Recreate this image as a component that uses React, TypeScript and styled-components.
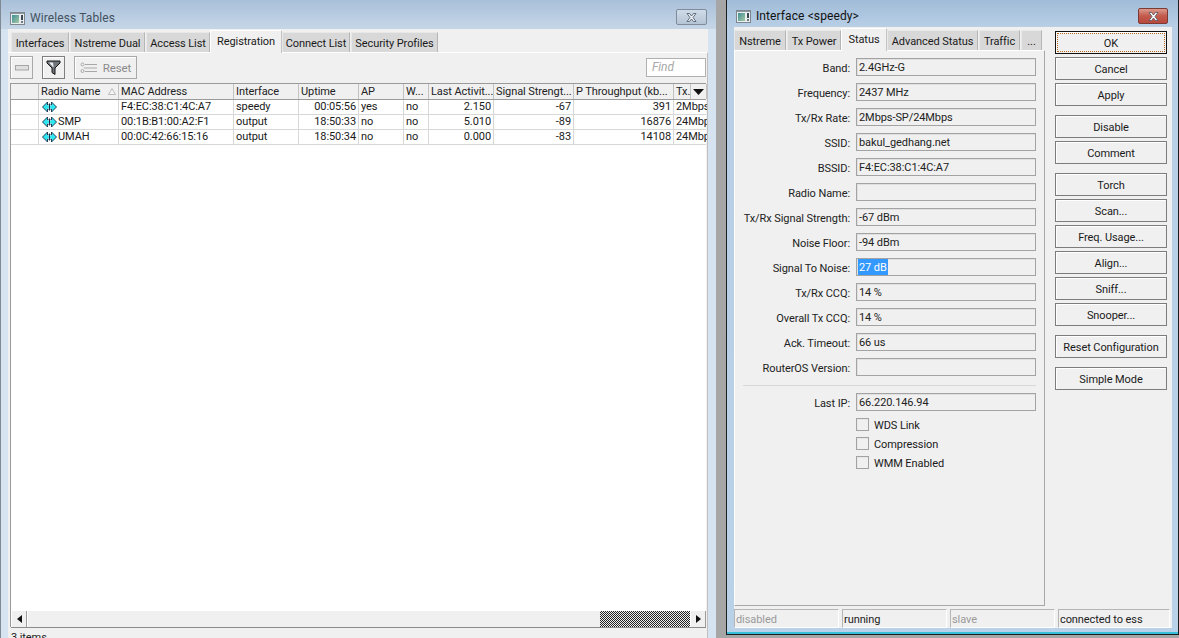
import React from "react";
import styled, { createGlobalStyle, css } from "styled-components";

const Global = createGlobalStyle`
  html, body { margin: 0; padding: 0; width: 1179px; height: 638px; overflow: hidden; background: #a6a6a6; }
  #root { width: 1179px; height: 638px; overflow: hidden; }
  * { box-sizing: border-box; }
`;
const FONT = `Roboto, "Liberation Sans", Arial, sans-serif`;

const Desktop = styled.div`
  display: flex; gap: 10px; width: 1179px; height: 638px; align-items: flex-start;
  font-family: ${FONT}; font-size: 11px; letter-spacing: -0.08px; color: #1a1a1a; overflow: hidden;
`;
const LeftWindow = styled.div`
  width: 716px; height: 660px; flex: none; display: flex; flex-direction: column;
  background: linear-gradient(#a9c0d9 0, #c6d6e7 29px, #d6e4f2 29px, #d6e4f2 100%);
  padding: 0 8px; border-left: 1px solid #7f8a95; position: relative;
`;
const RightWindow = styled.div`
  width: 453px; height: 637px; flex: none; display: flex; flex-direction: column;
  margin-top: -2px; border: 1px solid #1c1c1c;
  background: linear-gradient(#a0bbd8 0, #b8cfe6 28px, #b9d1e9 100%);
  padding: 0 6px 6px 7px; box-shadow: inset 0 -2px 0 #38bfd9;
`;
const TitleBar = styled.div`
  height: 29px; flex: none; display: flex; align-items: center; gap: 5px; padding: 7px 0 0 2px;
  font-size: 12px; letter-spacing: 0.1px; color: #44525f; position: relative; margin-left: -1px;
`;
const RightTitle = styled(TitleBar)`
  height: 28px; padding: 6px 0 0 2px; color: #111; margin-left: 0;
`;
const CloseBtn = styled.div<{ $red?: boolean }>`
  position: absolute; top: 9px; right: ${p => (p.$red ? 4 : 1)}px;
  width: ${p => (p.$red ? 30 : 31)}px; height: 16px; display: flex; align-items: center; justify-content: center;
  border: 1px solid ${p => (p.$red ? "#7d3a33" : "#7e8c9b")}; border-radius: 2px;
  background: ${p => (p.$red ? "linear-gradient(#dc9a8e, #c25a4c 50%, #b8493c)" : "linear-gradient(#cfdbe8, #b6c5d6)")};
`;
const Content = styled.div`
  flex: 1; background: #f0f0f0; display: flex; flex-direction: column; position: relative; margin-left: -1px;
`;
const TabStrip = styled.div`
  display: flex; height: 23px; align-items: flex-end; padding-left: 3px; flex: none;
`;
const Tab = styled.div<{ $active?: boolean; $w: number }>`
  width: ${p => p.$w}px; display: flex; align-items: center; justify-content: center;
  border: 1px solid #d9d9d9; border-bottom: none; margin-right: 1px; white-space: nowrap; padding-top: 2px;
  ${p => p.$active ? css`
    height: 23px; background: #f0f0f0; border-color: #fff #c4c4c4 #fff #fff; padding-top: 0; padding-bottom: 2px; margin: 0 0 -1px -1px; position: relative; z-index: 1;
  ` : css`
    height: 20px; background: #d8d8d8; border-color: #e8e8e8 #b5b5b5 #b5b5b5 #e8e8e8;
  `}
`;
const LeftBody = styled.div`
  flex: 1; border-top: 1px solid #fff; border-right: 1px solid #c0c0c0; display: flex; flex-direction: column; padding: 0 1px 0 2px;
`;
const Toolbar = styled.div`
  height: 30px; flex: none; display: flex; gap: 9px; padding-top: 3px; position: relative;
`;
const ToolBtn = styled.div<{ $w: number; $dark?: boolean }>`
  width: ${p => p.$w}px; height: 23px; display: flex; align-items: center; justify-content: center; gap: 6px;
  border: 1px solid ${p => (p.$dark ? "#7f7f7f" : "#a9a9a9")}; box-shadow: inset 1px 1px 0 #fff;
  color: #8a8a8a; font-size: 11.5px;
`;
const Find = styled.div`
  position: absolute; right: 0; top: 5px; width: 60px; height: 19px; background: #fff; border: 1px solid #b0b0b0;
  font-style: italic; color: #a8a8a8; padding: 1px 5px; font-size: 12px;
`;
const Table = styled.div`
  height: 544px; flex: none; display: flex; flex-direction: column; border: 1px solid #9a9a9a; border-bottom: none; border-right: 0; background: #fff; position: relative;
`;
const COLS = "28px 80px 115px 65px 60px 45px 25px 65px 80px 100px 17px 16px";
const HeaderRow = styled.div`
  display: grid; grid-template-columns: ${COLS}; height: 16px; flex: none; background: #f0f0f0; border-bottom: 1px solid #9a9a9a;
`;
const HeadCell = styled.div`
  border-right: 1px solid #c2c2c2; padding: 0 2px; overflow: hidden; white-space: nowrap; position: relative;
  display: flex; align-items: center; justify-content: space-between; color: #222;
`;
const Row = styled.div`
  display: grid; grid-template-columns: ${COLS}; height: 15px; flex: none; border-bottom: 1px solid #d8d8d8;
`;
const Cell = styled.div<{ $right?: boolean; $span?: number }>`
  border-right: 1px solid #d8d8d8; padding: 0 2px; white-space: nowrap; overflow: hidden; line-height: 14px;
  display: flex; align-items: center; justify-content: ${p => (p.$right ? "flex-end" : "flex-start")};
  ${p => p.$span ? `grid-column: span ${p.$span}; padding-right: 0; border-right: none;` : ""}
`;
const NameCell = styled(Cell)`
  padding-left: 3px; gap: 1px;
`;
const Spacer = styled.div`
  flex: 1;
`;
const HScroll = styled.div`
  height: 17px; flex: none; display: flex; background: #f0f0f0; border-top: 1px solid #fff; box-shadow: 0 1px 0 #8c8c8c;
`;
const ScrollArrow = styled.div`
  width: 16px; display: flex; align-items: center; justify-content: center; border-right: 1px solid #9c9c9c; border-left: 1px solid #fff;
`;
const ScrollTrack = styled.div`
  flex: 1; background: #f0f0f0; border-left: 1px solid #fff;
`;
const ScrollThumb = styled.div`
  width: 90px; background: repeating-conic-gradient(#222 0 25%, #eee 0 50%) 0 0 / 2px 2px;
`;
const ItemsLine = styled.div`
  padding: 4px 1px 0; height: 24px; color: #222;
`;
const DialogArea = styled.div`
  flex: 1; display: flex; gap: 10px; background: #f0f0f0; min-height: 0; position: relative;
`;
const DialogMain = styled.div`
  width: 311px; flex: none; display: flex; flex-direction: column;
`;
const DialogTabs = styled.div`
  display: flex; height: 23px; align-items: flex-end; flex: none;
`;
const Panel = styled.div`
  height: 556px; border: 1px solid #a8a8a8; border-top-color: #fff; border-left-color: #fff; padding: 7px 8px 0 8px; display: flex; flex-direction: column; flex: none;
`;
const FieldRow = styled.div`
  display: grid; grid-template-columns: 107px 180px; column-gap: 6px; height: 18px; margin-bottom: 7px; align-items: center;
`;
const Label = styled.div`
  white-space: nowrap; color: #222; justify-self: end; padding-top: 2px;
`;
const Value = styled.div`
  height: 18px; border: 1px solid #a3a3a3; box-shadow: inset 1px 1px 0 #e0e0e0; padding: 0 2px; line-height: 18px; white-space: nowrap; color: #222;
`;
const Selected = styled.span`
  background: #3399ff; color: #fff; padding: 0 1px; margin-left: -1px; display: inline-block; line-height: 15px; vertical-align: top; padding-top: 1px;
`;
const Divider = styled.div`
  height: 1px; background: #d8d8d8; margin: 2px 0 7px 0;
`;
const CheckRow = styled.div`
  display: flex; align-items: center; gap: 5px; height: 13px; margin-left: 113px; margin-bottom: 6px;
`;
const CheckText = styled.span`
  padding-top: 2px;
`;
const Box = styled.div`
  width: 13px; height: 13px; border: 1px solid #a3a3a3; box-shadow: inset 1px 1px 0 #e8e8e8; background: #f0f0f0;
`;
const ButtonCol = styled.div`
  width: 112px; flex: none; display: flex; flex-direction: column; padding-top: 4px;
`;
const Button = styled.div<{ $gap?: number; $default?: boolean }>`
  height: 23px; flex: none; margin-bottom: ${p => p.$gap ?? 3}px; display: flex; align-items: center; justify-content: center; padding-top: 2px;
  border: 1px solid #7c7c7c; box-shadow: inset 1px 1px 0 #fff; background: #f0f0f0; color: #1a1a1a; white-space: nowrap;
  ${p => p.$default && css`
    border-color: #111; outline: 1px dotted #b8691b; outline-offset: -3px;
  `}
`;
const StatusBar = styled.div`
  display: flex; gap: 3px; height: 19px; position: absolute; left: 0; top: 582px; width: 436px;
`;
const StatusSeg = styled.div<{ $w: number; $muted?: boolean }>`
  width: ${p => p.$w}px; height: 19px; flex: none; border: 1px solid #b5b5b5; border-right-color: #fff; border-bottom-color: #fff; padding: 1px; line-height: 18px;
  color: ${p => (p.$muted ? "#9a9a9a" : "#222")}; white-space: nowrap; overflow: hidden;
`;

const WinIcon = () => (
  <svg width="15" height="13" viewBox="0 0 15 13">
    <defs>
      <linearGradient id="wg" x1="0" y1="0" x2="1" y2="1">
        <stop offset="0" stopColor="#3f8f96" /><stop offset="1" stopColor="#a6c7a4" />
      </linearGradient>
    </defs>
    <rect x="0.5" y="0.5" width="14" height="12" fill="#e8edf0" stroke="#7d878d" />
    <rect x="1" y="1" width="13" height="1" fill="#8b959b" />
    <rect x="2" y="3" width="7" height="8" fill="url(#wg)" />
    <rect x="11" y="3" width="2" height="5" fill="#3d4a52" />
    <rect x="11" y="9" width="2" height="2" fill="#6c787e" />
  </svg>
);
const CloseX = ({ color }: { color: string }) => (
  <svg width="13" height="11" viewBox="0 0 13 11">
    <path d="M2 1.5h2.6L6.5 4l1.9-2.5H11L8 5.5l3 4H8.4L6.5 7 4.6 9.5H2l3-4z" fill={color} stroke="#4a5663" strokeWidth="0.8" />
  </svg>
);
const Radio = () => (
  <svg width="15" height="12" viewBox="0 0 15 12">
    <path d="M0.5 6 5.5 1v3h4V1l5 5-5 5V8h-4v3z" fill="#2ce6f0" stroke="#1a2c4a" strokeWidth="0.9" />
    <path d="M7.5 2.5v7" stroke="#1a2c4a" strokeWidth="1" />
    <path d="M5.5 4.6h1.5M8 4.6h1.5M5.5 7.4h1.5M8 7.4h1.5" stroke="#c9f7fa" strokeWidth="0.8" />
  </svg>
);
const Funnel = () => (
  <svg width="15" height="15" viewBox="0 0 15 15">
    <path d="M1 1h13v2L9 8v6.5L6 12.5V8L1 3z" fill="#6f757a" stroke="#161616" strokeWidth="1" />
    <path d="M3 2.5h4L7.6 7H7z" fill="#f0f2f4" />
  </svg>
);
const Minus = () => <svg width="14" height="6" viewBox="0 0 14 6"><rect x="0.5" y="0.5" width="13" height="4.5" fill="#dfdfdf" stroke="#a5a5a5" /></svg>;
const ResetIcon = () => (
  <svg width="17" height="12" viewBox="0 0 17 12" fill="none" stroke="#a8a8a8">
    <circle cx="2.5" cy="2.5" r="1.5" /><circle cx="2.5" cy="9" r="1.5" />
    <path d="M5 2.5h12M4 6h13M5 9.5h12" />
  </svg>
);

const tabsLeft = [
  { t: "Interfaces", w: 58 }, { t: "Nstreme Dual", w: 75 }, { t: "Access List", w: 64 },
  { t: "Registration", w: 72, a: true }, { t: "Connect List", w: 68 }, { t: "Security Profiles", w: 87 },
];
const rows = [
  { n: "", m: "F4:EC:38:C1:4C:A7", i: "speedy", u: "00:05:56", ap: "yes", w: "no", l: "2.150", s: "-67", p: "391", x: "2Mbps" },
  { n: "SMP", m: "00:1B:B1:00:A2:F1", i: "output", u: "18:50:33", ap: "no", w: "no", l: "5.010", s: "-89", p: "16876", x: "24Mbp" },
  { n: "UMAH", m: "00:0C:42:66:15:16", i: "output", u: "18:50:34", ap: "no", w: "no", l: "0.000", s: "-83", p: "14108", x: "24Mbp" },
];
const fields: [string, string][] = [
  ["Band:", "2.4GHz-G"], ["Frequency:", "2437 MHz"], ["Tx/Rx Rate:", "2Mbps-SP/24Mbps"], ["SSID:", "bakul_gedhang.net"],
  ["BSSID:", "F4:EC:38:C1:4C:A7"], ["Radio Name:", ""], ["Tx/Rx Signal Strength:", "-67 dBm"], ["Noise Floor:", "-94 dBm"],
  ["Signal To Noise:", "§27 dB"], ["Tx/Rx CCQ:", "14 %"], ["Overall Tx CCQ:", "14 %"], ["Ack. Timeout:", "66 us"], ["RouterOS Version:", ""],
];
const buttons: [string, number][] = [
  ["OK", 3], ["Cancel", 3], ["Apply", 9], ["Disable", 3], ["Comment", 9], ["Torch", 3], ["Scan...", 3], ["Freq. Usage...", 3],
  ["Align...", 3], ["Sniff...", 3], ["Snooper...", 9], ["Reset Configuration", 9], ["Simple Mode", 3],
];

export default function App() {
  return (
    <Desktop>
      <Global />
      <LeftWindow>
        <TitleBar>
          <WinIcon /> Wireless Tables
          <CloseBtn><CloseX color="#e8eef4" /></CloseBtn>
        </TitleBar>
        <Content>
          <TabStrip>
            {tabsLeft.map(t => <Tab key={t.t} $w={t.w} $active={t.a}>{t.t}</Tab>)}
          </TabStrip>
          <LeftBody>
            <Toolbar>
              <ToolBtn $w={23}><Minus /></ToolBtn>
              <ToolBtn $w={23} $dark><Funnel /></ToolBtn>
              <ToolBtn $w={63}><ResetIcon /> Reset</ToolBtn>
              <Find>Find</Find>
            </Toolbar>
            <Table>
              <HeaderRow>
                <HeadCell />
                <HeadCell>Radio Name <svg width="8" height="7" viewBox="0 0 8 7"><path d="M4 .5 7.5 6.5H.5z" fill="#f4f4f4" stroke="#bdbdbd" /></svg></HeadCell>
                <HeadCell>MAC Address</HeadCell>
                <HeadCell>Interface</HeadCell>
                <HeadCell>Uptime</HeadCell>
                <HeadCell>AP</HeadCell>
                <HeadCell>W...</HeadCell>
                <HeadCell>Last Activit...</HeadCell>
                <HeadCell>Signal Strengt...</HeadCell>
                <HeadCell>P Throughput (kb...</HeadCell>
                <HeadCell>Tx.</HeadCell>
                <HeadCell><svg width="11" height="6" viewBox="0 0 11 6"><path d="M0 0h11L5.5 6z" fill="#111" /></svg></HeadCell>
              </HeaderRow>
              {rows.map(r => (
                <Row key={r.m}>
                  <Cell />
                  <NameCell><Radio />{r.n}</NameCell>
                  <Cell>{r.m}</Cell>
                  <Cell>{r.i}</Cell>
                  <Cell $right>{r.u}</Cell>
                  <Cell>{r.ap}</Cell>
                  <Cell>{r.w}</Cell>
                  <Cell $right>{r.l}</Cell>
                  <Cell $right>{r.s}</Cell>
                  <Cell $right>{r.p}</Cell>
                  <Cell $span={2}>{r.x}</Cell>
                </Row>
              ))}
              <Spacer />
              <HScroll>
                <ScrollArrow><svg width="5" height="8" viewBox="0 0 5 8"><path d="M5 0v8L0 4z" fill="#111" /></svg></ScrollArrow>
                <ScrollTrack />
                <ScrollThumb />
                <ScrollArrow><svg width="5" height="8" viewBox="0 0 5 8"><path d="M0 0v8l5-4z" fill="#111" /></svg></ScrollArrow>
              </HScroll>
            </Table>
            <ItemsLine>3 items</ItemsLine>
          </LeftBody>
        </Content>
      </LeftWindow>
      <RightWindow>
        <RightTitle>
          <WinIcon /> Interface &lt;speedy&gt;
          <CloseBtn $red><CloseX color="#fff" /></CloseBtn>
        </RightTitle>
        <DialogArea>
          <DialogMain>
            <DialogTabs>
              <Tab $w={52}>Nstreme</Tab>
              <Tab $w={54}>Tx Power</Tab>
              <Tab $w={46} $active>Status</Tab>
              <Tab $w={91}>Advanced Status</Tab>
              <Tab $w={41}>Traffic</Tab>
              <Tab $w={21}>...</Tab>
            </DialogTabs>
            <Panel>
              {fields.map(([l, v]) => (
                <FieldRow key={l}>
                  <Label>{l}</Label>
                  <Value>{v.startsWith("§") ? <Selected>{v.slice(1)}</Selected> : v}</Value>
                </FieldRow>
              ))}
              <Divider />
              <FieldRow>
                <Label>Last IP:</Label>
                <Value>66.220.146.94</Value>
              </FieldRow>
              <CheckRow><Box /><CheckText>WDS Link</CheckText></CheckRow>
              <CheckRow><Box /><CheckText>Compression</CheckText></CheckRow>
              <CheckRow><Box /><CheckText>WMM Enabled</CheckText></CheckRow>
            </Panel>
          </DialogMain>
          <ButtonCol>
            {buttons.map(([b, g]) => <Button key={b} $gap={g} $default={b === "OK"}>{b}</Button>)}
          </ButtonCol>
          <StatusBar>
            <StatusSeg $w={105} $muted>disabled</StatusSeg>
            <StatusSeg $w={105}>running</StatusSeg>
            <StatusSeg $w={105} $muted>slave</StatusSeg>
            <StatusSeg $w={112}>connected to ess</StatusSeg>
          </StatusBar>
        </DialogArea>
      </RightWindow>
    </Desktop>
  );
}
